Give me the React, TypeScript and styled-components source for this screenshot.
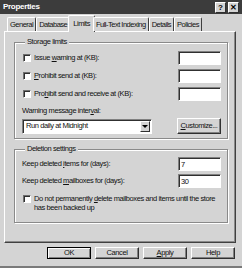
import React from 'react';
import styled, { createGlobalStyle } from 'styled-components';

const GlobalStyle = createGlobalStyle`
  html, body {
    margin: 0;
    padding: 0;
    background: #d4d4d4;
  }
  body {
    font-family: "Liberation Sans", Arial, sans-serif;
    font-size: 7.5px;
    letter-spacing: -0.4px;
    line-height: 10px;
    color: #111;
  }
`;

const Window = styled.div`
  width: 242px;
  height: 268px;
  box-sizing: border-box;
  display: flex;
  flex-direction: column;
  background: #d4d4d4;
  overflow: hidden;
  border-bottom: 2px solid #7a7a7a;
`;

const TitleBar = styled.div`
  height: 14px;
  flex: none;
  background: #3c3c3c;
  display: flex;
  align-items: center;
  padding: 0 3px;
  color: #fff;
  font-weight: bold;
  font-size: 8px;
  letter-spacing: -0.3px;
`;

const TitleText = styled.span`
  flex: 1;
`;

const TitleButton = styled.div`
  width: 9px;
  height: 9px;
  margin-left: 2px;
  background: #d4d4d4;
  border: 1px solid;
  border-color: #fff #303030 #303030 #fff;
  color: #000;
  font-size: 8px;
  line-height: 9px;
  letter-spacing: 0;
  text-align: center;
`;

const TabStrip = styled.div`
  display: flex;
  align-items: flex-end;
  height: 16px;
  margin-top: 1px;
  padding-left: 7px;
  position: relative;
  z-index: 1;
  flex: none;
`;

const Tab = styled.div<{ $active?: boolean }>`
  box-sizing: border-box;
  height: ${(p) => (p.$active ? 17 : 14)}px;
  margin: ${(p) => (p.$active ? '0 -2px -1px -2px' : '0')};
  padding: ${(p) => (p.$active ? '0 4px' : '0 2px')};
  border-top: 1px solid #fff;
  border-left: 1px solid #fff;
  border-right: 1px solid #404040;
  border-radius: 2px 2px 0 0;
  background: #d4d4d4;
  display: flex;
  align-items: center;
  white-space: nowrap;
  letter-spacing: -0.5px;
`;

const Panel = styled.div`
  box-sizing: border-box;
  height: 212px;
  margin: 0 6px 0 4px;
  border: 1px solid;
  border-color: #fff #404040 #404040 #fff;
  box-shadow: inset -1px -1px 0 #8a8a8a;
  padding: 5px 7px 0 9px;
  display: flex;
  flex-direction: column;
  gap: 5px;
  flex: none;
`;

const Group = styled.fieldset<{ $pb: number }>`
  margin: 0;
  padding: 0 6px ${(p) => p.$pb}px 7px;
  border: 1px solid #8a8a8a;
  box-shadow: 1px 1px 0 #fff, inset 1px 1px 0 #fff;
  min-width: 0;
`;

const Legend = styled.legend`
  padding: 0 2px;
  margin-left: 3px;
  background: #d4d4d4;
  line-height: 10px;
`;

const Row = styled.div<{ $h: number }>`
  height: ${(p) => p.$h}px;
  display: flex;
  align-items: center;
  justify-content: space-between;
`;

const CheckLabel = styled.label`
  display: flex;
  align-items: flex-start;
  gap: 3px;
  margin-left: 1px;
`;

const CheckBox = styled.span`
  width: 8px;
  height: 8px;
  flex: none;
  box-sizing: border-box;
  background: #fff;
  border: 1px solid;
  border-color: #707070 #fff #fff #707070;
  box-shadow: inset 1px 1px 0 #303030;
  margin-top: 1px;
`;

const TextBox = styled.div`
  width: 43px;
  height: 14px;
  box-sizing: border-box;
  background: #fff;
  border: 1px solid;
  border-color: #808080 #fff #fff #808080;
  box-shadow: inset 1px 1px 0 #303030;
  padding: 2px 0 0 2px;
`;

const Select = styled.div`
  width: 130px;
  height: 15px;
  box-sizing: border-box;
  background: #fff;
  border: 1px solid;
  border-color: #808080 #fff #fff #808080;
  box-shadow: inset 1px 1px 0 #303030;
  display: flex;
  align-items: center;
  padding: 1px 1px 1px 3px;
`;

const SelectText = styled.span`
  flex: 1;
`;

const ArrowButton = styled.div`
  width: 10px;
  height: 11px;
  box-sizing: border-box;
  background: #d4d4d4;
  border: 1px solid;
  border-color: #fff #303030 #303030 #fff;
  display: flex;
  align-items: center;
  justify-content: center;
  &::after {
    content: '';
    border-left: 3px solid transparent;
    border-right: 3px solid transparent;
    border-top: 3px solid #000;
  }
`;

const Button = styled.div<{ $default?: boolean; $w: number; $h: number }>`
  width: ${(p) => p.$w}px;
  height: ${(p) => p.$h}px;
  box-sizing: border-box;
  background: #d4d4d4;
  border: 1px solid;
  border-color: ${(p) => (p.$default ? '#000' : '#fff #303030 #303030 #fff')};
  box-shadow: ${(p) =>
    p.$default ? 'inset 1px 1px 0 #fff, inset -1px -1px 0 #808080' : 'inset -1px -1px 0 #808080'};
  display: flex;
  align-items: center;
  justify-content: center;
`;

const Plain = styled.div<{ $h: number }>`
  height: ${(p) => p.$h}px;
  display: flex;
  align-items: center;
`;

const Wrap = styled.span`
  display: block;
  width: 190px;
  line-height: 9px;
`;

const ButtonRow = styled.div`
  display: flex;
  justify-content: flex-end;
  gap: 4px;
  margin-top: 4px;
  padding-right: 7px;
`;

const U = styled.span`
  text-decoration: underline;
`;

const tabs = ['General', 'Database', 'Limits', 'Full-Text Indexing', 'Details', 'Policies'];

export default function App() {
  return (
    <>
      <GlobalStyle />
      <Window>
        <TitleBar>
          <TitleText>Properties</TitleText>
          <TitleButton>?</TitleButton>
          <TitleButton>✕</TitleButton>
        </TitleBar>
        <TabStrip>
          {tabs.map((t) => (
            <Tab key={t} $active={t === 'Limits'}>
              {t}
            </Tab>
          ))}
        </TabStrip>
        <Panel>
          <Group $pb={4}>
            <Legend>Storage limits</Legend>
            <Row $h={18} style={{ marginTop: 2 }}>
              <CheckLabel>
                <CheckBox />
                <span>
                  Issue <U>w</U>arning at (KB):
                </span>
              </CheckLabel>
              <TextBox />
            </Row>
            <Row $h={18}>
              <CheckLabel>
                <CheckBox />
                <span>
                  <U>P</U>rohibit send at (KB):
                </span>
              </CheckLabel>
              <TextBox />
            </Row>
            <Row $h={18}>
              <CheckLabel>
                <CheckBox />
                <span>
                  Pro<U>h</U>ibit send and receive at (KB):
                </span>
              </CheckLabel>
              <TextBox />
            </Row>
            <Plain $h={15}>
              Warning message inter<U>v</U>al:
            </Plain>
            <Row $h={16}>
              <Select>
                <SelectText>Run daily at Midnight</SelectText>
                <ArrowButton />
              </Select>
              <Button $w={44} $h={16}>
                <span>
                  <U>C</U>ustomize...
                </span>
              </Button>
            </Row>
          </Group>
          <Group $pb={9}>
            <Legend>Deletion settings</Legend>
            <Row $h={17} style={{ marginTop: 1 }}>
              <span>
                Keep deleted <U>i</U>tems for (days):
              </span>
              <TextBox>7</TextBox>
            </Row>
            <Row $h={17}>
              <span>
                Keep deleted <U>m</U>ailboxes for (days):
              </span>
              <TextBox>30</TextBox>
            </Row>
            <Row $h={20} style={{ marginTop: 4 }}>
              <CheckLabel>
                <CheckBox />
                <Wrap>
                  Do not permanently <U>d</U>elete mailboxes and items until the store has been
                  backed up
                </Wrap>
              </CheckLabel>
            </Row>
          </Group>
        </Panel>
        <ButtonRow>
          <Button $default $w={44} $h={12}>
            OK
          </Button>
          <Button $w={44} $h={12}>
            Cancel
          </Button>
          <Button $w={44} $h={12}>
            <span>
              <U>A</U>pply
            </span>
          </Button>
          <Button $w={44} $h={12}>
            Help
          </Button>
        </ButtonRow>
      </Window>
    </>
  );
}
